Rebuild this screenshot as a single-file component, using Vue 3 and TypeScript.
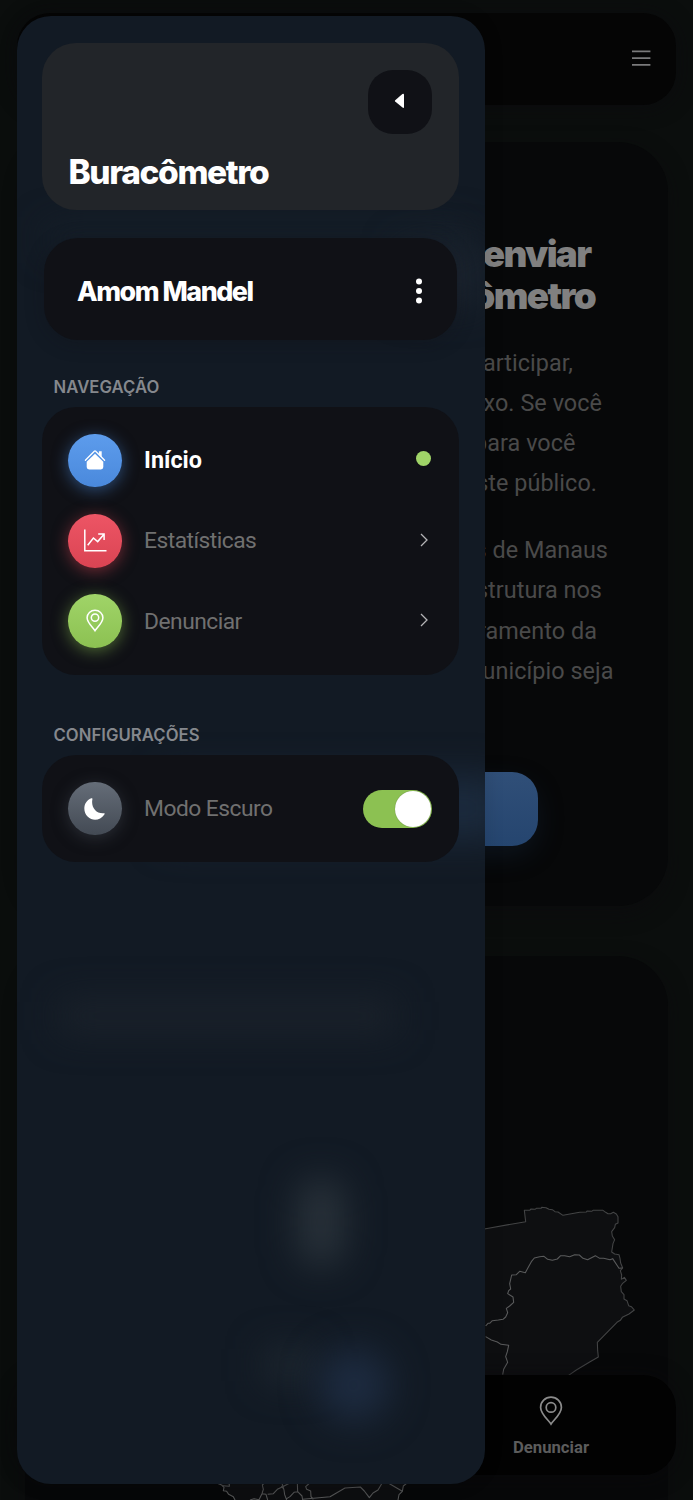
<script setup lang="ts">
import { ref } from 'vue'

interface NavItem {
  label: string
  tone: string
  icon: string
  active: boolean
}

interface TextLine {
  text: string
  inset: number
}

const navItems: NavItem[] = [
  { label: 'Início', tone: 'blue', icon: 'house', active: true },
  { label: 'Estatísticas', tone: 'red', icon: 'chart', active: false },
  { label: 'Denunciar', tone: 'green', icon: 'pin', active: false },
]

const headingLines: TextLine[] = [
  { text: 'enviar', inset: 77.5 },
  { text: 'Buracômetro', inset: 73 },
]

const paragraphs: TextLine[][] = [
  [
    { text: 'participar,', inset: 95 },
    { text: 'abaixo. Se você', inset: 66 },
    { text: 'para você', inset: 92.5 },
    { text: 'este público.', inset: 71 },
  ],
  [
    { text: 'vias de Manaus', inset: 60 },
    { text: 'infraestrutura nos', inset: 66 },
    { text: 'monitoramento da', inset: 71 },
    { text: 'município seja', inset: 54.5 },
  ],
]

const darkMode = ref(true)
</script>

<template>
  <div class="screen">
    <main class="page">
      <section class="card intro">
        <h1>
          <span
            v-for="line in headingLines"
            :key="line.text"
            class="line"
            :style="{ paddingRight: line.inset + 'px' }"
          >{{ line.text }}</span>
        </h1>
        <p v-for="(lines, i) in paragraphs" :key="i">
          <span
            v-for="line in lines"
            :key="line.text"
            class="line"
            :style="{ paddingRight: line.inset + 'px' }"
          >{{ line.text }}</span>
        </p>
        <button class="cta" type="button" aria-label="Denunciar"></button>
      </section>
      <section class="card map-card"></section>
    </main>

    <svg class="map" width="693" height="350" viewBox="0 1150 693 350" fill="#0e0f11" stroke="#434445" stroke-width="3.2" stroke-linejoin="round">
      <g transform="translate(473 1180) scale(.33333)">
        <path d="M0 154 38 146 158 125 154 91 170 91 174 87 186 88 190 85 204 85 206 82 219 83 228 88 238 89 246 95 255 96 270 106 320 97 340 96 342 93 356 94 360 91 390 91 398 97 405 101 413 101 421 97 430 102 435 110 435 129 427 133 425 143 416 155 418 168 425 179 420 191 416 216 425 222 438 224 441 235 443 249 449 264 442 272 446 285 445 298 454 292 460 301 448 311 443 319 445 335 453 344 453 357 462 362 467 377 475 380 484 390 468 402 448 412 442 421 432 427 373 487 374 512 376 531 350 546 310 570 290 584 250 612 0 612Z" />
        <path stroke="#5a5b5c" d="M38 438 45 430 50 430 58 422 76 420 90 418 98 411 104 398 100 385 110 378 122 367 120 351 104 341 107 332 113 327 110 311 116 285 130 284 140 274 157 278 165 263 175 245 184 234 200 230 213 229 224 238 238 241 253 237 263 227 275 227 290 230 305 224 319 225 330 235 344 239 367 227 380 235 392 235 411 239 419 236 438 265 448 264 M38 470 55 480 73 486 84 493 107 496 103 515 98 530 104 547 92 568 89 584" fill="none" />
      </g>
      <g transform="translate(200 1440) scale(.33333)" stroke="#545556">
        <path d="M52 130H620L610 138 607 154 597 164 594 180V200H105V180L100 170 86 163 80 154 70 152 72 142 65 135Z" />
        <path fill="none" d="M80 130 88 132 88 139 68 137 M150 180 162 176 177 179 186 161 190 148 187 135 192 130 M186 161 198 163 203 180 M203 163 220 161 232 148 248 140 268 130 M246 130 252 150 254 164 260 180 M252 148 244 138 M292 130 293 155 306 168 308 180 M293 155 282 157 270 170 260 176 M316 130 326 132 317 140 320 148 332 153 333 170 340 178 M308 178 390 170 435 144 481 141 493 153 508 173 519 159 534 150 546 130 M566 130 607 154" />
      </g>
    </svg>

    <header class="topbar">
      <svg class="menu-icon" width="20" height="18" viewBox="0 0 20 18" stroke="#7a7a7b" stroke-width="1.7">
        <path d="M1 2.4H19.4M1 9.1H19.4M1 15.8H19.4" />
      </svg>
    </header>

    <footer class="tabbar">
      <div class="tab">
        <svg width="24" height="30" viewBox="0 0 24 30" fill="none" stroke="#8b8b8b" stroke-width="1.7">
          <path d="M12 28C10 24.6 1.6 18 1.6 11.4A10.4 10.2 0 0 1 22.4 11.4C22.4 18 14 24.6 12 28Z" />
          <circle cx="12" cy="11.4" r="4.8" />
        </svg>
        <span>Denunciar</span>
      </div>
    </footer>

    <aside class="drawer">
      <i class="glow glow-title"></i>
      <i class="glow glow-heading"></i>
      <i class="glow glow-action"></i>
      <i class="glow glow-subtitle"></i>
      <i class="glow glow-marker"></i>
      <i class="glow glow-label"></i>
      <i class="glow glow-pin"></i>

      <div class="brand">
        <button class="close" type="button" aria-label="Fechar">
          <svg width="12" height="16" viewBox="0 0 12 16" fill="#fff">
            <path d="M1.2 7.2 8.4 1.1Q10 .2 10 2V14Q10 15.5 8.5 14.5L1.2 8.6Q.4 7.9 1.2 7.2Z" />
          </svg>
        </button>
        <h2>Buracômetro</h2>
      </div>

      <div class="user">
        <strong>Amom Mandel</strong>
        <svg width="8" height="28" viewBox="0 0 8 28" fill="#fff">
          <circle cx="4" cy="4.5" r="3" />
          <circle cx="4" cy="14" r="3" />
          <circle cx="4" cy="23.4" r="3" />
        </svg>
      </div>

      <h3>NAVEGAÇÃO</h3>
      <nav class="panel">
        <a v-for="item in navItems" :key="item.label" class="row" :class="{ active: item.active }">
          <span class="badge" :class="item.tone">
            <svg v-if="item.icon === 'house'" width="22" height="22" viewBox="0 0 22 22" fill="none" stroke="#fff">
              <path d="M1.4 11.2 10.3 2.2Q11 1.5 11.7 2.2L20.6 11.2" stroke-width="1.3" stroke-linecap="round" />
              <path d="M14.9 2.2H17.7V8.2L14.9 5.4Z" fill="#fff" stroke="none" />
              <path d="M11 4.8 19.3 12.8V18Q19.3 20.4 16.9 20.4H5.1Q2.7 20.4 2.7 18V12.8Z" fill="#fff" stroke="none" />
            </svg>
            <svg v-else-if="item.icon === 'chart'" width="24" height="24" viewBox="0 0 24 24" fill="none" stroke="#fff" stroke-width="1.5">
              <path d="M1.8.5V21.7H23.5" />
              <path d="M4.7 16.3 10.4 9 14.7 12.6 21 5.2M15.2 5.1H21.1V11" />
            </svg>
            <svg v-else width="20" height="24" viewBox="0 0 20 24" fill="none" stroke="#fff" stroke-width="1.5">
              <path d="M10 21.7C8.5 18.9 2.1 14 2.1 8.8A7.9 7.5 0 0 1 17.9 8.8C17.9 14 11.5 18.9 10 21.7Z" />
              <circle cx="10" cy="8.6" r="3.7" />
            </svg>
          </span>
          <span class="label">{{ item.label }}</span>
          <i v-if="item.active" class="dot"></i>
          <svg v-else class="chevron" width="10" height="14" viewBox="0 0 10 14" fill="none" stroke="#b4b4b6" stroke-width="1.3">
            <path d="M2 1 8 7 2 13" />
          </svg>
        </a>
      </nav>

      <h3 class="second">CONFIGURAÇÕES</h3>
      <div class="panel">
        <div class="row">
          <span class="badge gray">
            <svg width="24" height="24" viewBox="0 0 24 24" fill="#fff">
              <path d="M8.2 1.3Q9.8.7 9.4 2.2C7.8 10 13 17 20.8 16.3Q22.3 16 21.4 17.4C17.3 23.7 9.5 24.3 4.8 19.8C-.8 14.4.4 4.4 8.2 1.3Z" />
            </svg>
          </span>
          <span class="label">Modo Escuro</span>
          <button class="switch" :class="{ on: darkMode }" type="button" aria-label="Modo Escuro" @click="darkMode = !darkMode"><i></i></button>
        </div>
      </div>
    </aside>
  </div>
</template>

<style>
body {
  background: #0b0e0d;
}
</style>

<style scoped>
* {
  box-sizing: border-box;
}

.screen {
  position: relative;
  width: 693px;
  height: 1500px;
  overflow: hidden;
  background: #0b0e0d;
  font-family: Roboto, "Liberation Sans", sans-serif;
}

button {
  border: 0;
  padding: 0;
}

h1, h2, h3, p {
  margin: 0;
}

.page {
  display: flex;
  flex-direction: column;
  gap: 50px;
  padding: 142px 25px 0;
}

.card {
  flex: none;
  border-radius: 50px;
  background: #070809;
  box-shadow: 0 7px 20px rgba(12, 10, 14, 0.6);
}

.intro {
  display: flex;
  flex-direction: column;
  height: 764px;
  padding-top: 90.5px;
}

.map-card {
  height: 700px;
}

.line {
  display: block;
  text-align: right;
  white-space: nowrap;
}

h1 {
  color: #808080;
  font: 900 36.8px/42px Inter, sans-serif;
  letter-spacing: -1.65px;
}

p {
  margin-top: 26.8px;
  color: #4a4a4a;
  font-size: 23.4px;
  line-height: 40.2px;
  letter-spacing: 0.05px;
}

.intro p:first-of-type {
  margin-top: 26px;
}

.cta {
  align-self: center;
  width: 383px;
  height: 74px;
  margin-top: 80.9px;
  border-radius: 26px;
  background: linear-gradient(#304f78, #25456f);
  box-shadow: 0 10px 30px -4px rgba(37, 69, 111, 0.25);
}

.map {
  position: absolute;
  left: 0;
  bottom: 0;
}

.topbar {
  position: absolute;
  top: 13px;
  left: 17px;
  right: 17px;
  height: 92px;
  display: flex;
  align-items: center;
  justify-content: flex-end;
  padding-right: 25px;
  border-radius: 33px;
  background: #050505;
  box-shadow: 0 2px 20px rgba(12, 10, 14, 0.7);
}

.menu-icon {
  margin-top: -2px;
}

.tabbar {
  position: absolute;
  left: 17px;
  right: 17px;
  bottom: 25px;
  height: 100px;
  display: flex;
  justify-content: flex-end;
  padding-right: 17px;
  border-radius: 33px;
  background: #020202;
  box-shadow: 0 2px 20px rgba(10, 9, 11, 0.7);
}

.tab {
  width: 216px;
  display: flex;
  flex-direction: column;
  align-items: center;
  padding-top: 21px;
  color: #5c5c5c;
  font-size: 16.7px;
  font-weight: 700;
  line-height: 20px;
}

.tab span {
  margin-top: 11.5px;
}

.drawer {
  position: absolute;
  top: 16.4px;
  left: 16.7px;
  width: 468.6px;
  height: 1467.2px;
  padding: 26.6px 26.6px 26.4px 25.3px;
  border-radius: 34px;
  background: #121a24;
  box-shadow: 0 0 20px rgba(0, 0, 0, 0.12);
  overflow: hidden;
}

.drawer > :not(.glow) {
  position: relative;
}

.glow {
  position: absolute;
  filter: blur(18px);
}

.glow-title {
  left: 30px;
  top: 212px;
  width: 420px;
  height: 24px;
  background: #17212b;
}

.glow-heading {
  right: 5px;
  top: 230px;
  width: 80px;
  height: 60px;
  background: #1c2530;
}

.glow-action {
  right: -20px;
  top: 760px;
  width: 340px;
  height: 64px;
  background: #1b2a3d;
}

.glow-subtitle {
  left: 43px;
  top: 984px;
  width: 335px;
  height: 32px;
  background: #1b222b;
}

.glow-marker {
  left: 281px;
  top: 1162px;
  width: 46px;
  height: 88px;
  border-radius: 20px;
  background: #29323a;
}

.glow-label {
  left: 248px;
  top: 1332px;
  width: 50px;
  height: 34px;
  background: #1e2730;
}

.glow-pin {
  left: 301px;
  top: 1332px;
  width: 72px;
  height: 74px;
  border-radius: 50%;
  background: #1d2b40;
}

.brand {
  display: flex;
  flex-direction: column;
  justify-content: space-between;
  height: 167.5px;
  padding: 26.9px 26.5px 18.4px;
  border-radius: 34px;
  background: #222529;
}

.close {
  align-self: flex-end;
  width: 64px;
  height: 64px;
  display: flex;
  align-items: center;
  justify-content: center;
  border-radius: 25px;
  background: #101116;
}

.close svg {
  margin-top: -2px;
}

h2 {
  color: #fff;
  font: 800 33.5px/40px Inter, sans-serif;
  letter-spacing: -1.4px;
}

.user {
  display: flex;
  align-items: center;
  justify-content: space-between;
  height: 102px;
  margin: 27.2px 1.7px 0;
  padding: 5px 34px 0 33.3px;
  border-radius: 34px;
  background: #101116;
  box-shadow: 0 3px 18px rgba(16, 17, 22, 0.35);
}

.user strong {
  color: #fff;
  font: 800 26.8px/32px Inter, sans-serif;
  letter-spacing: -1.45px;
}

h3 {
  margin: 36.2px 0 0 11.5px;
  color: #85888d;
  font: 600 16.7px/22px Inter, sans-serif;
  letter-spacing: 0.05px;
}

h3.second {
  margin-top: 49.3px;
}

.panel {
  margin-top: 9px;
  padding: 13.4px 26.9px 13.4px 26.5px;
  border-radius: 34px;
  background: #101116;
}

.row {
  display: flex;
  align-items: center;
  height: 80.4px;
  color: #707070;
  font-size: 22.8px;
  letter-spacing: -0.53px;
}

.row.active {
  color: #fff;
  font-size: 23.4px;
  font-weight: 700;
  letter-spacing: 0;
}

.label {
  flex: 1;
  margin-left: 22px;
}

.badge {
  width: 53.6px;
  height: 53.6px;
  display: flex;
  align-items: center;
  justify-content: center;
  border-radius: 50%;
}

.blue {
  background: linear-gradient(#5d9cec, #4a89dc);
  box-shadow: 0 3px 16px rgba(74, 137, 220, 0.5);
}

.red {
  background: linear-gradient(#ed5565, #da4453);
  box-shadow: 0 3px 16px rgba(218, 68, 83, 0.5);
}

.green {
  background: linear-gradient(#a0d468, #8cc152);
  box-shadow: 0 3px 16px rgba(140, 193, 82, 0.5);
}

.gray {
  background: linear-gradient(#656d78, #434a54);
  box-shadow: 0 3px 16px rgba(67, 74, 84, 0.5);
}

.dot {
  width: 15.4px;
  height: 15.4px;
  margin-top: -4px;
  margin-right: 0.5px;
  border-radius: 50%;
  background: #a0d468;
}

.chevron {
  margin-right: 2.7px;
  margin-top: -1.5px;
}

.switch {
  display: flex;
  width: 69px;
  height: 38px;
  padding: 1px;
  border-radius: 19px;
  background: #444;
}

.switch.on {
  justify-content: flex-end;
  background: #8cc152;
}

.switch i {
  width: 36px;
  height: 36px;
  border-radius: 50%;
  background: #fff;
  box-shadow: 0 0 1px rgba(0, 0, 0, 0.4);
}
</style>
